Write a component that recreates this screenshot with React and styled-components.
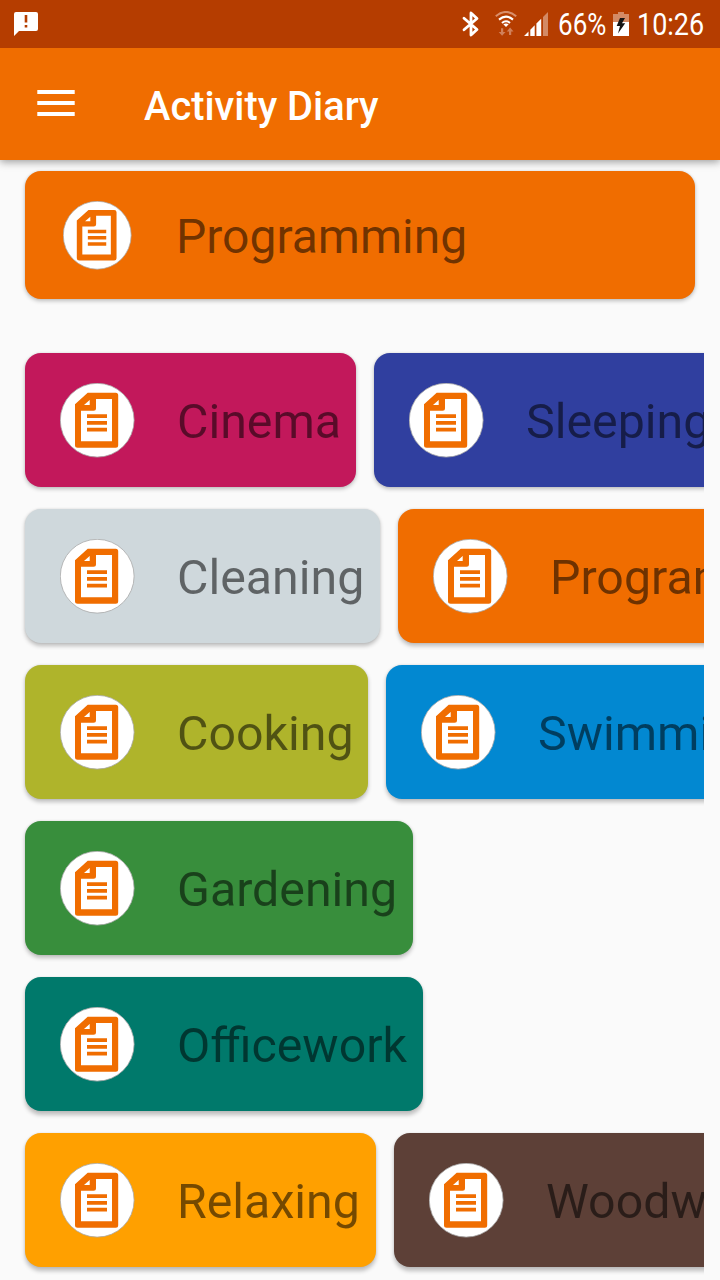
import React from 'react';
import styled, { createGlobalStyle } from 'styled-components';

const GlobalStyle = createGlobalStyle`
  * { box-sizing: border-box; }
  body { margin: 0; background: #fafafa; font-family: Roboto, sans-serif; }
  svg { display: block; flex: none; }
`;

const Screen = styled.div`
  width: 720px;
  height: 1280px;
  overflow: hidden;
  display: flex;
  flex-direction: column;
  background: #fafafa;
`;

const StatusBar = styled.div`
  position: relative;
  z-index: 1;
  height: 48px;
  flex: none;
  display: flex;
  align-items: center;
  justify-content: space-between;
  padding: 0 16px 0 14px;
  background: #b53d00;
  color: #fff;
`;

const StatusGroup = styled.div`
  display: flex;
  align-items: center;
`;

const StatusText = styled.span`
  width: ${(p) => p.$width}px;
  margin-left: ${(p) => p.$gap}px;
  margin-top: 2px;
  font-size: 31px;
  line-height: 48px;
  white-space: nowrap;
  transform: scaleX(${(p) => p.$scale});
  transform-origin: left center;
`;

const AppBar = styled.header`
  height: 112px;
  flex: none;
  display: flex;
  align-items: center;
  padding: 0 37px;
  background: #f06d00;
  box-shadow: 0 2px 8px rgba(0, 0, 0, 0.38);
`;

const MenuButton = styled.button`
  width: 38px;
  height: 26px;
  margin: -2px 0 0;
  padding: 0;
  border: 0;
  background: none;
`;

const Title = styled.h1`
  margin: 6px 0 0 69px;
  font-size: 39.8px;
  font-weight: 500;
  line-height: 48px;
  color: #fff;
`;

const Current = styled.section`
  padding: 11px 25px 0;
  height: 182px;
  flex: none;
`;

const Activities = styled.section`
  width: 704px;
  margin-top: 1px;
  display: flex;
  flex-direction: column;
`;

const Row = styled.div`
  height: 156px;
  flex: none;
  display: flex;
  gap: 18px;
  padding: 10px 0 0 25px;
  overflow: hidden;
`;

const Card = styled.article`
  height: ${(p) => (p.$current ? 128 : 134)}px;
  width: ${(p) => p.$width}px;
  flex: none;
  display: flex;
  align-items: center;
  padding: 0 0 0 ${(p) => (p.$current ? 38 : 35)}px;
  border-radius: 16px;
  background: ${(p) => p.$color};
  box-shadow: 0 ${(p) => p.$lift}px 4px rgba(0, 0, 0, 0.24), 0 0 2px rgba(0, 0, 0, 0.1);
`;

const Name = styled.span`
  margin: ${(p) => (p.$current ? '4px 0 0 44px' : '4px 0 0 42px')};
  font-size: ${(p) => (p.$current ? 48 : 48.3)}px;
  line-height: 56px;
  white-space: nowrap;
  color: rgba(0, 0, 0, 0.54);
`;

function NoteIcon({ size }) {
  return (
    <svg width={size} height={size} viewBox="0.3 0.3 75 75">
      <circle cx="37.5" cy="37.5" r="36.9" fill="#fff" stroke="#a9a9a9" strokeWidth="0.8" />
      <path
        fill="#f06d00"
        fillRule="evenodd"
        d="M28 10H56Q58.5 10 58.5 12.5V62.5Q58.5 65 56 65H18Q15.3 65 15.3 62.5V21.5ZM36.3 16.3V25.5Q36.3 28 33.8 28H21.3V58.5H52.3V16.3ZM30 17.3L24.3 22.4H30Z"
      />
      <path d="M27.3 33.4H47.3M27.3 40.2H47.3M27.3 47H47.3" stroke="#f06d00" strokeWidth="3.7" />
    </svg>
  );
}

function FeedbackIcon() {
  return (
    <svg width="24" height="24" viewBox="0 0 24 24">
      <path
        fill="#fff"
        fillRule="evenodd"
        d="M2 0H22Q24 0 24 2V17Q24 19 22 19H5L0 24V2Q0 0 2 0ZM10.7 3V10.5H13.3V3ZM10.7 13V15.5H13.3V13Z"
      />
    </svg>
  );
}

function BluetoothIcon() {
  return (
    <svg width="18" height="26" viewBox="0 0 18 26">
      <path
        d="M2 7.2L15 18.5L9 24V2L15 7.5L2 18.8"
        fill="none"
        stroke="#fff"
        strokeWidth="2.8"
        strokeLinejoin="round"
        strokeLinecap="round"
      />
    </svg>
  );
}

function WifiIcon() {
  return (
    <svg width="22" height="26" viewBox="0 0 22 26">
      <g fill="none" strokeWidth="2.1">
        <path d="M.8 5.2Q11-3.2 21.2 5.2" stroke="#d98f6b" />
        <path d="M4 8.6Q11 2.6 18 8.6M7 12Q11 8.5 15 12" stroke="#fff" />
      </g>
      <path d="M8.3 13.2Q11 11.6 13.7 13.2L11 16Z" fill="#fff" />
      <path
        d="M6 17.2H8.2V21H10.5L7.1 24.8L3.7 21H6ZM14 24H16.2V20.6H18.5L15.1 16.6L11.7 20.6H14Z"
        fill="#d0805a"
      />
    </svg>
  );
}

function SignalIcon() {
  return (
    <svg width="24" height="24" viewBox="0 0 24 24">
      <path d="M0 24L4.5 19.5V24ZM6.3 24V17.7L10.7 13.3V24ZM12.4 24V11.6L17.2 6.8V24Z" fill="#fff" />
      <path d="M19 24V5L24 0V24Z" fill="#d38a65" />
    </svg>
  );
}

function BatteryIcon() {
  return (
    <svg width="16" height="24" viewBox="0 0 16 24">
      <path d="M5 0H11V2H16V10H0V2H5Z" fill="#d38a65" />
      <path d="M0 10H16V24H0Z" fill="#fff" />
      <path d="M7 6H12L9 11.2H12.2L5 21.5L7 14H3.7Z" fill="#141414" />
    </svg>
  );
}

const IconSlot = styled.span`
  margin-left: ${(p) => p.$gap}px;
`;

function ActivityCard({ name, color, width, current, lift = 2 }) {
  return (
    <Card $color={color} $width={width} $current={current} $lift={lift}>
      <NoteIcon size={current ? 69 : 75} />
      <Name $current={current}>{name}</Name>
    </Card>
  );
}

const rows = [
  [
    { name: 'Cinema', color: '#c2185b', width: 331 },
    { name: 'Sleeping', color: '#303f9f', width: 372 },
  ],
  [
    { name: 'Cleaning', color: '#cfd8dc', width: 355 },
    { name: 'Programming', color: '#f06d00', width: 458 },
  ],
  [
    { name: 'Cooking', color: '#afb42b', width: 343 },
    { name: 'Swimming', color: '#0288d1', width: 380 },
  ],
  [{ name: 'Gardening', color: '#388e3c', width: 388 }],
  [{ name: 'Officework', color: '#00796b', width: 398 }],
  [
    { name: 'Relaxing', color: '#ffa000', width: 351 },
    { name: 'Woodworking', color: '#5d4037', width: 450 },
  ],
];

export default function App() {
  return (
    <Screen>
      <GlobalStyle />
      <StatusBar>
        <FeedbackIcon />
        <StatusGroup>
          <BluetoothIcon />
          <IconSlot $gap={15}><WifiIcon /></IconSlot>
          <IconSlot $gap={7}><SignalIcon /></IconSlot>
          <StatusText $gap={10} $width={49} $scale={0.84}>66%</StatusText>
          <IconSlot $gap={6}><BatteryIcon /></IconSlot>
          <StatusText $gap={8} $width={67} $scale={0.87}>10:26</StatusText>
        </StatusGroup>
      </StatusBar>
      <AppBar>
        <MenuButton aria-label="Menu">
          <svg width="38" height="26" viewBox="0 0 38 26">
            <path d="M.3 2H37.7M.3 13H37.7M.3 24H37.7" stroke="#fff" strokeWidth="4" />
          </svg>
        </MenuButton>
        <Title>Activity Diary</Title>
      </AppBar>
      <Current>
        <ActivityCard name="Programming" color="#f06d00" width={670} current />
      </Current>
      <Activities>
        {rows.map((row, i) => (
          <Row key={row[0].name}>
            {row.map((a) => (
              <ActivityCard key={a.name} {...a} lift={2 + i * 0.3} />
            ))}
          </Row>
        ))}
      </Activities>
    </Screen>
  );
}
